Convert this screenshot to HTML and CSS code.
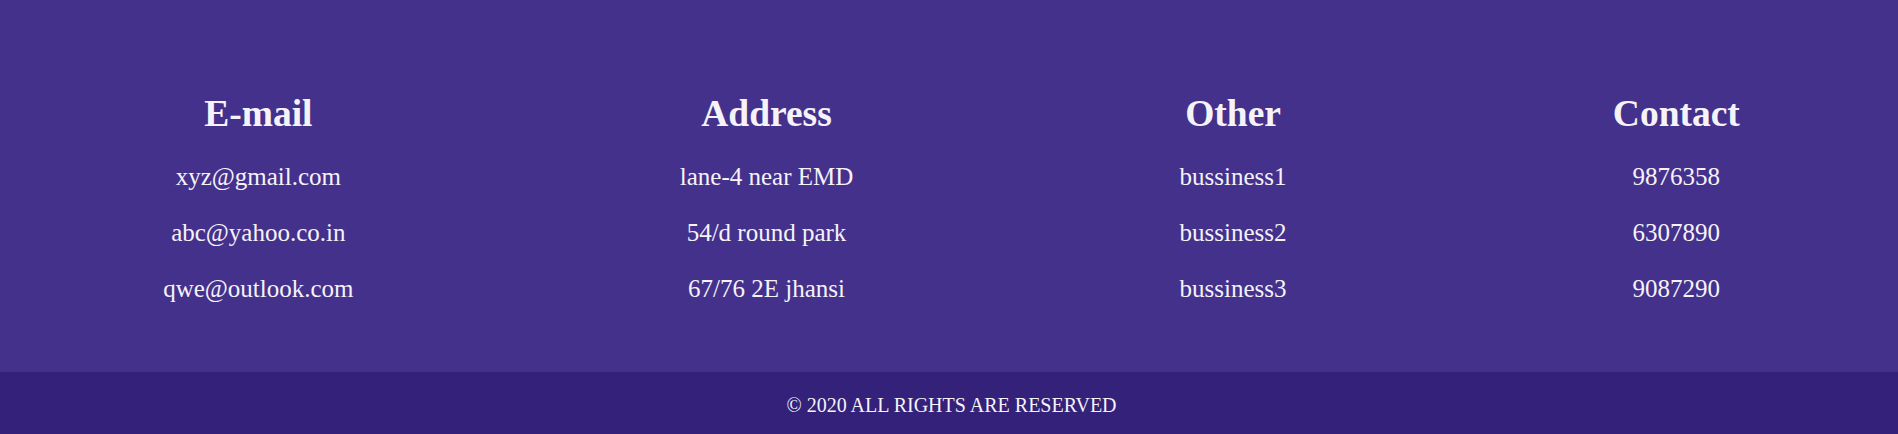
FILE: index.html
```html
<!DOCTYPE html>
<html>
<head>
<meta charset="utf-8">
<link rel="stylesheet" href="styles.css">
</head>
<body>
<section class="info">
  <div class="col">
    <h2>E-mail</h2>
    <p>xyz@gmail.com</p>
    <p>abc@yahoo.co.in</p>
    <p>qwe@outlook.com</p>
  </div>
  <div class="col">
    <h2>Address</h2>
    <p>lane-4 near EMD</p>
    <p>54/d round park</p>
    <p>67/76 2E jhansi</p>
  </div>
  <div class="col">
    <h2>Other</h2>
    <p>bussiness1</p>
    <p>bussiness2</p>
    <p>bussiness3</p>
  </div>
  <div class="col">
    <h2>Contact</h2>
    <p>9876358</p>
    <p>6307890</p>
    <p>9087290</p>
  </div>
</section>
<footer class="foot">© 2020 ALL RIGHTS ARE RESERVED</footer>
</body>
</html>
```

FILE: styles.css
```css
html, body {
  margin: 0;
  padding: 0;
}
body {
  font-family: "Liberation Serif", "Times New Roman", serif;
  color: #f5f3f8;
  background: #33217a;
  overflow-x: hidden;
}
.info {
  background: #44318c;
  display: flex;
  justify-content: space-around;
  width: calc(100% + 5px);
  padding: 92px 0 55px;
  height: 372px;
  box-sizing: border-box;
}
.col {
  display: flex;
  flex-direction: column;
  align-items: center;
}
.col h2 {
  margin: 0 0 13px;
  font-size: 37.5px;
  line-height: 44px;
  font-weight: bold;
}
.col p {
  margin: 0;
  font-size: 25px;
  line-height: 56px;
}
.foot {
  background: #33217a;
  width: calc(100% + 5px);
  text-align: center;
  font-size: 20px;
  line-height: 22px;
  padding: 22px 0 18px;
}
```
